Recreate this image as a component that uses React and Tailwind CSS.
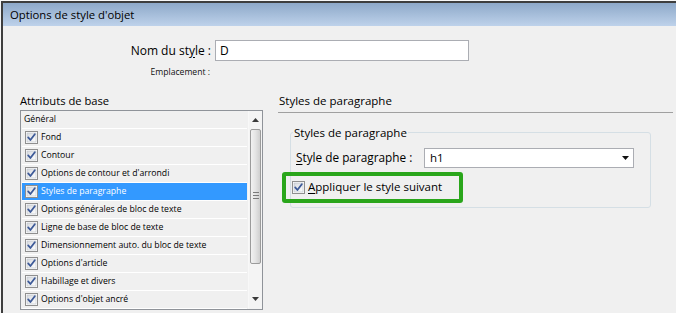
import React from "react";

const F = { fontFamily: '"Open Sans", "Noto Sans", sans-serif' };

function Check({ className = "" }) {
  return (
    <svg width="13" height="13" viewBox="0 0 13 13" className={className}>
      <defs>
        <linearGradient id="cbg" x1="0" y1="0" x2="1" y2="1">
          <stop offset="0" stopColor="#d6d9de" />
          <stop offset="1" stopColor="#ffffff" />
        </linearGradient>
      </defs>
      <rect x="0.5" y="0.5" width="12" height="12" fill="#fff" stroke="#8f8f8f" />
      <rect x="2" y="2" width="9" height="9" fill="url(#cbg)" stroke="#b9bec6" strokeWidth="0.6" />
      <path d="M3.2 6.4 L5.4 9 L9.8 3.2" fill="none" stroke="#3d5a98" strokeWidth="1.8" strokeLinejoin="round" strokeLinecap="round" />
    </svg>
  );
}

function Tri({ up = false, color = "#3a3a3a" }) {
  return (
    <svg width="7" height="4" viewBox="0 0 7 4">
      {up ? <path d="M0 4 L3.5 0 L7 4 Z" fill={color} /> : <path d="M0 0 L7 0 L3.5 4 Z" fill={color} />}
    </svg>
  );
}

const rows = [
  "Fond",
  "Contour",
  "Options de contour et d'arrondi",
  "Styles de paragraphe",
  "Options générales de bloc de texte",
  "Ligne de base de bloc de texte",
  "Dimensionnement auto. du bloc de texte",
  "Options d'article",
  "Habillage et divers",
  "Options d'objet ancré",
];

export default function App() {
  return (
    <div className="w-[676px] h-[313px] overflow-hidden bg-[#f7f7f7] text-black" style={F}>
      <div className="mt-px ml-px h-[312px] border-t-2 border-l-2 border-[#3e3e3e] bg-[#f0f0f0] flex flex-col">
        {/* title bar */}
        <div className="h-[23px] shrink-0 bg-gradient-to-b from-[#8ea9c9] to-[#bed2eb] flex items-center pl-[7px] text-[11.3px] leading-none">
          Options de style d'objet
        </div>

        {/* body */}
        <div className="flex flex-col pl-[17px]">
          <div className="flex items-center mt-[14px]">
            <div className="w-[194px] text-right text-[12px] leading-none pr-[3px]">
              Nom du st<span className="underline underline-offset-2">y</span>le :
            </div>
            <div className="ml-[1px] w-[254px] h-[21px] bg-white border border-[#abadb3] flex items-center pl-[4px] text-[12px]">
              D
            </div>
          </div>
          <div className="w-[190px] text-right text-[8.6px] leading-none mt-[7px] text-[#111]">
            Emplacement :
          </div>

          <div className="flex mt-[15px]">
            {/* left column */}
            <div className="w-[243px] flex flex-col">
              <div className="h-[18px] text-[11.2px] leading-[18px]">Attributs de base</div>
              <div className="h-[200px] border border-[#8f9399] bg-[#f0f0f0] flex">
                <div className="flex-1 flex flex-col pl-px pr-px text-[8.7px]">
                  <div className="h-[18px] border-b border-white flex items-center pl-[2px]">Général</div>
                  {rows.map((r, i) => {
                    const sel = i === 3;
                    return (
                      <div
                        key={r}
                        className={
                          "h-[18px] border-b border-white flex items-center pl-[3px] gap-[3px] " +
                          (sel ? "bg-[#3399ff] text-white" : "")
                        }
                      >
                        <Check />
                        <span>{r}</span>
                      </div>
                    );
                  })}
                </div>
                {/* scrollbar */}
                <div className="w-[14px] bg-[#f4f4f4] flex flex-col border-l border-[#f8f8f8]">
                  <div className="h-[18px] flex items-center justify-center">
                    <Tri up />
                  </div>
                  <div className="h-[135px] mx-px rounded-[2px] border border-[#9b9b9b] bg-gradient-to-r from-[#f2f2f2] via-[#e4e4e4] to-[#cfcfcf] flex flex-col items-center justify-center gap-[2px] pb-[6px] pt-[62px]">
                    <div className="w-[6px] h-px bg-[#7a7a7a]" />
                    <div className="w-[6px] h-px bg-[#7a7a7a]" />
                    <div className="w-[6px] h-px bg-[#7a7a7a]" />
                    <div className="flex-1" />
                  </div>
                  <div className="flex-1 flex items-end justify-center pb-[8px]">
                    <Tri />
                  </div>
                </div>
              </div>
            </div>

            {/* right column */}
            <div className="ml-[15px] mr-[3px] flex-1 flex flex-col">
              <div className="h-[21px] border-b border-[#a0a0a0] text-[11.5px] leading-[18px] pl-px">
                Styles de paragraphe
              </div>
              <fieldset className="mt-[12px] ml-[12px] w-[361px] border border-[#d5dfe5] rounded-[3px] pl-[5px] pb-[4px]">
                <legend className="-ml-[3px] px-[1px] text-[11.5px] leading-[16px]">Styles de paragraphe</legend>
                <div className="flex items-center mt-[7px] h-[20px]">
                  <div className="text-[11.8px] w-[128px]">
                    <span className="underline underline-offset-2">S</span>tyle de paragraphe :
                  </div>
                  <div className="w-[210px] h-[20px] bg-white border border-[#abadb3] flex items-center justify-between pl-[5px] pr-[4px] text-[11.5px]">
                    <span>h1</span>
                    <Tri color="#111" />
                  </div>
                </div>
                <div className="mt-[4px] -ml-[14px] w-[181px] h-[31px] border-[4px] border-[#2aa61b] rounded-[3px] flex items-center pl-[6px] gap-[3px]">
                  <Check />
                  <span className="text-[11.5px] leading-none">
                    <span className="underline underline-offset-2">A</span>ppliquer le style suivant
                  </span>
                </div>
              </fieldset>
            </div>
          </div>
        </div>
      </div>
    </div>
  );
}
